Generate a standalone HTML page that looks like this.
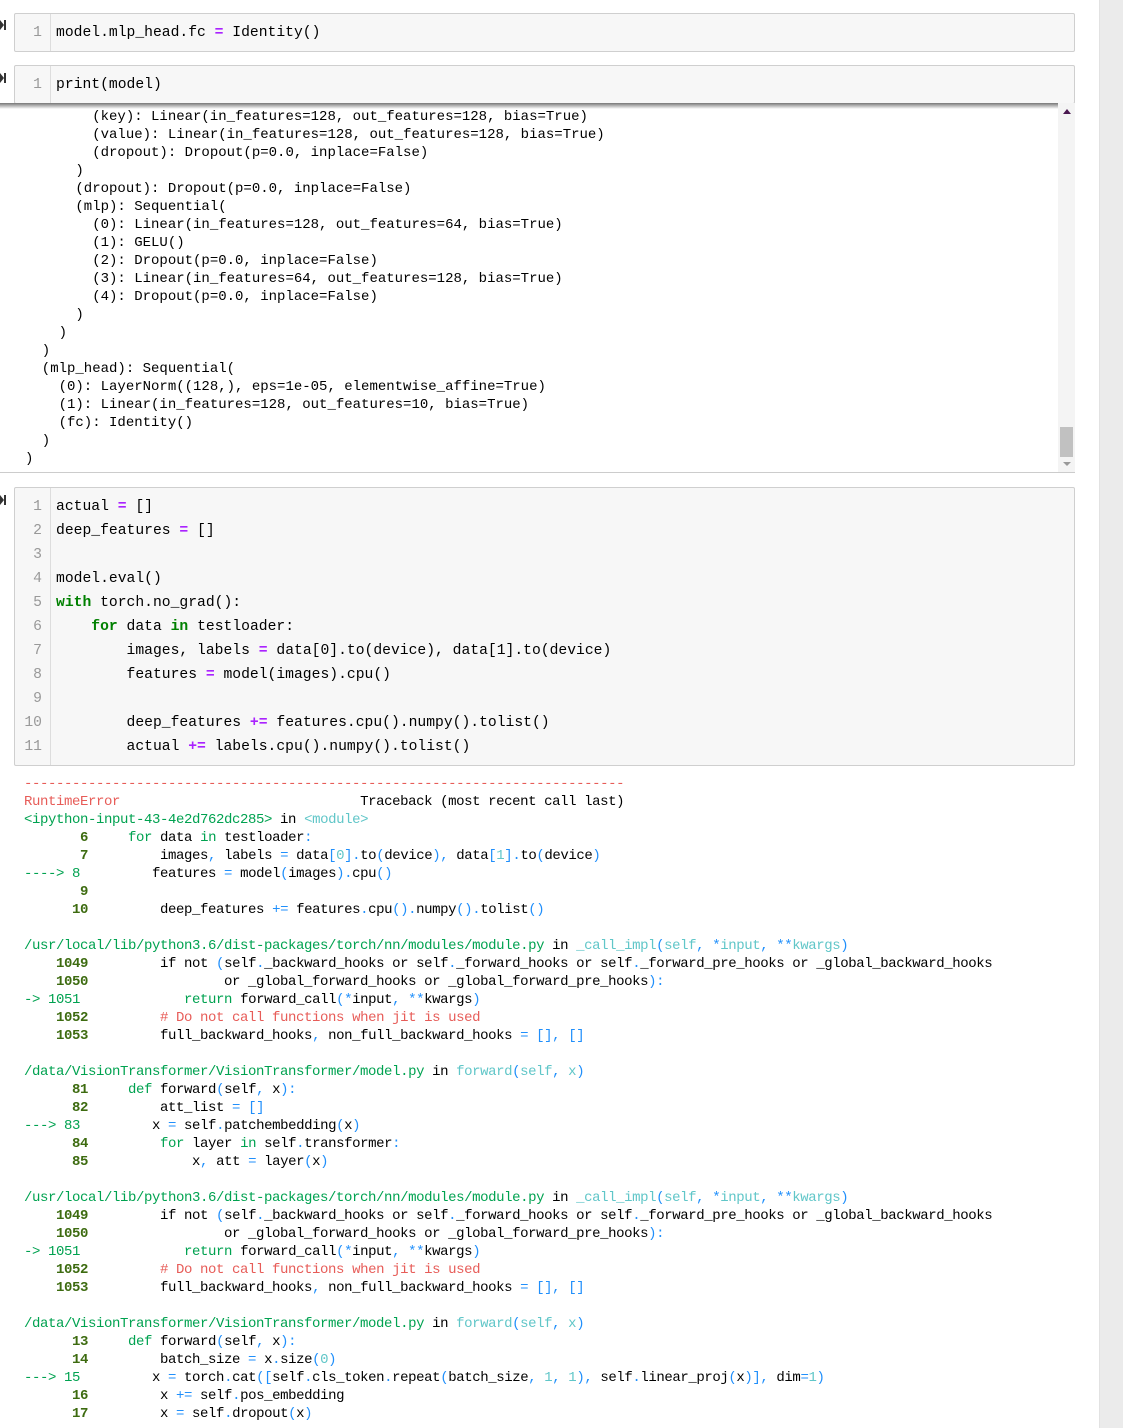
<!DOCTYPE html>
<html><head><meta charset="utf-8">
<style>
*{margin:0;padding:0;box-sizing:border-box}
body{width:1123px;height:1428px;background:#fff;position:relative;overflow:hidden;font-family:"Liberation Mono","NanumGothic",monospace}
.side{position:absolute;left:1099px;top:0;width:24px;height:1428px;background:#ebebeb;border-left:1px solid #e2e2e2}
.cell{position:absolute;left:14px;width:1061px;background:#f7f7f7;border:1px solid #cfcfcf;border-radius:2px}
.gut{position:absolute;left:0;top:0;bottom:0;width:36px;border-right:1px solid #ddd}
.cell pre{position:absolute;left:41px;top:0;font-size:14.7px;line-height:24px;color:#000;font-family:"Liberation Mono",monospace}
.ln{position:absolute;left:0;width:27px;text-align:right;font-size:14.7px;line-height:24px;color:#999;top:0}
.mk{position:absolute;left:0;width:6px;height:12px;font-size:10px}
.mk:before{content:"";position:absolute;left:0;top:0;border-left:4px solid #333;border-top:5px solid transparent;border-bottom:5px solid transparent}
.mk:after{content:"";position:absolute;left:4px;top:0;width:2px;height:10px;background:#333}
.op{color:#aa22ff;font-weight:bold}
.kw{color:#008000;font-weight:bold}
.out{position:absolute;left:0;top:103px;width:1075px;height:370px;overflow:hidden;background:#fff;border-bottom:1px solid #ccc}
.out .sh{position:absolute;left:0;top:0;width:1058px;height:6px;background:linear-gradient(#777,rgba(255,255,255,0))}
.out pre{position:absolute;left:25px;top:5px;font-size:14px;line-height:18px;color:#000;font-family:"Liberation Mono",monospace}
.sb{position:absolute;left:1058px;top:0;width:17px;height:370px;background:#f4f4f4}
.thumb{position:absolute;left:2px;top:324px;width:13px;height:30px;background:#c1c1c1}
.tb{position:absolute;left:24px;top:775px;font-size:14px;letter-spacing:-0.4px;line-height:18px;color:#000;font-family:"Liberation Mono","NanumGothic",monospace}
.g{color:#00a250}.c{color:#60c6c8}.b{color:#208ffb}.r{color:#e75c58}.n{color:#3d6b10;font-weight:bold}
</style></head><body>
<div class="side"></div>

<div class="mk" style="top:20px"></div>
<div class="cell" style="top:13px;height:39px"><div class="gut"></div><div class="ln" style="top:7px">1</div><pre style="top:7px">model.mlp_head.fc <span class="op">=</span> Identity()</pre></div>

<div class="mk" style="top:73px"></div>
<div class="cell" style="top:65px;height:39px"><div class="gut"></div><div class="ln" style="top:7px">1</div><pre style="top:7px">print(model)</pre></div>

<div class="out"><div class="sh"></div>
<pre>        (key): Linear(in_features=128, out_features=128, bias=True)
        (value): Linear(in_features=128, out_features=128, bias=True)
        (dropout): Dropout(p=0.0, inplace=False)
      )
      (dropout): Dropout(p=0.0, inplace=False)
      (mlp): Sequential(
        (0): Linear(in_features=128, out_features=64, bias=True)
        (1): GELU()
        (2): Dropout(p=0.0, inplace=False)
        (3): Linear(in_features=64, out_features=128, bias=True)
        (4): Dropout(p=0.0, inplace=False)
      )
    )
  )
  (mlp_head): Sequential(
    (0): LayerNorm((128,), eps=1e-05, elementwise_affine=True)
    (1): Linear(in_features=128, out_features=10, bias=True)
    (fc): Identity()
  )
)</pre>
<div class="sb"><div style="position:absolute;left:5px;top:6px;border-left:4px solid transparent;border-right:4px solid transparent;border-bottom:5px solid #4a1850"></div><div class="thumb"></div><div style="position:absolute;left:5px;top:359px;border-left:4px solid transparent;border-right:4px solid transparent;border-top:4px solid #999"></div></div>
</div>

<div class="mk" style="top:495px"></div>
<div class="cell" style="top:487px;height:279px"><div class="gut"></div>
<div class="ln" style="top:7px">1<br>2<br>3<br>4<br>5<br>6<br>7<br>8<br>9<br>10<br>11</div>
<pre style="top:7px">actual <span class="op">=</span> []
deep_features <span class="op">=</span> []

model.eval()
<span class="kw">with</span> torch.no_grad():
    <span class="kw">for</span> data <span class="kw">in</span> testloader:
        images, labels <span class="op">=</span> data[0].to(device), data[1].to(device)
        features <span class="op">=</span> model(images).cpu()

        deep_features <span class="op">+=</span> features.cpu().numpy().tolist()
        actual <span class="op">+=</span> labels.cpu().numpy().tolist()</pre></div>

<pre class="tb"><span class="r">---------------------------------------------------------------------------</span>
<span class="r">RuntimeError</span>                              Traceback (most recent call last)
<span class="g">&lt;ipython-input-43-4e2d762dc285&gt;</span> in <span class="c">&lt;module&gt;</span>
<span class="n">       6</span>     <span class="g">for</span> data <span class="g">in</span> testloader<span class="b">:</span>
<span class="n">       7</span>         images<span class="b">,</span> labels <span class="b">=</span> data<span class="b">[</span><span class="c">0</span><span class="b">]</span><span class="b">.</span>to<span class="b">(</span>device<span class="b">)</span><span class="b">,</span> data<span class="b">[</span><span class="c">1</span><span class="b">]</span><span class="b">.</span>to<span class="b">(</span>device<span class="b">)</span>
<span class="g">----&gt; 8</span>         features <span class="b">=</span> model<span class="b">(</span>images<span class="b">)</span><span class="b">.</span>cpu<span class="b">()</span>
<span class="n">       9</span>
<span class="n">      10</span>         deep_features <span class="b">+=</span> features<span class="b">.</span>cpu<span class="b">()</span><span class="b">.</span>numpy<span class="b">()</span><span class="b">.</span>tolist<span class="b">()</span>

<span class="g">/usr/local/lib/python3.6/dist-packages/torch/nn/modules/module.py</span> in <span class="c">_call_impl</span><span class="b">(</span><span class="c">self</span><span class="b">,</span> <span class="b">*</span><span class="c">input</span><span class="b">,</span> <span class="b">**</span><span class="c">kwargs</span><span class="b">)</span>
<span class="n">    1049</span>         if not <span class="b">(</span>self<span class="b">.</span>_backward_hooks or self<span class="b">.</span>_forward_hooks or self<span class="b">.</span>_forward_pre_hooks or _global_backward_hooks
<span class="n">    1050</span>                 or _global_forward_hooks or _global_forward_pre_hooks<span class="b">):</span>
<span class="g">-&gt; 1051</span>             <span class="g">return</span> forward_call<span class="b">(*</span>input<span class="b">,</span> <span class="b">**</span>kwargs<span class="b">)</span>
<span class="n">    1052</span>         <span class="r"># Do not call functions when jit is used</span>
<span class="n">    1053</span>         full_backward_hooks<span class="b">,</span> non_full_backward_hooks <span class="b">=</span> <span class="b">[],</span> <span class="b">[]</span>

<span class="g">/data/VisionTransformer/VisionTransformer/model.py</span> in <span class="c">forward</span><span class="b">(</span><span class="c">self</span><span class="b">,</span> <span class="c">x</span><span class="b">)</span>
<span class="n">      81</span>     <span class="g">def</span> forward<span class="b">(</span>self<span class="b">,</span> x<span class="b">):</span>
<span class="n">      82</span>         att_list <span class="b">=</span> <span class="b">[]</span>
<span class="g">---&gt; 83</span>         x <span class="b">=</span> self<span class="b">.</span>patchembedding<span class="b">(</span>x<span class="b">)</span>
<span class="n">      84</span>         <span class="g">for</span> layer <span class="g">in</span> self<span class="b">.</span>transformer<span class="b">:</span>
<span class="n">      85</span>             x<span class="b">,</span> att <span class="b">=</span> layer<span class="b">(</span>x<span class="b">)</span>

<span class="g">/usr/local/lib/python3.6/dist-packages/torch/nn/modules/module.py</span> in <span class="c">_call_impl</span><span class="b">(</span><span class="c">self</span><span class="b">,</span> <span class="b">*</span><span class="c">input</span><span class="b">,</span> <span class="b">**</span><span class="c">kwargs</span><span class="b">)</span>
<span class="n">    1049</span>         if not <span class="b">(</span>self<span class="b">.</span>_backward_hooks or self<span class="b">.</span>_forward_hooks or self<span class="b">.</span>_forward_pre_hooks or _global_backward_hooks
<span class="n">    1050</span>                 or _global_forward_hooks or _global_forward_pre_hooks<span class="b">):</span>
<span class="g">-&gt; 1051</span>             <span class="g">return</span> forward_call<span class="b">(*</span>input<span class="b">,</span> <span class="b">**</span>kwargs<span class="b">)</span>
<span class="n">    1052</span>         <span class="r"># Do not call functions when jit is used</span>
<span class="n">    1053</span>         full_backward_hooks<span class="b">,</span> non_full_backward_hooks <span class="b">=</span> <span class="b">[],</span> <span class="b">[]</span>

<span class="g">/data/VisionTransformer/VisionTransformer/model.py</span> in <span class="c">forward</span><span class="b">(</span><span class="c">self</span><span class="b">,</span> <span class="c">x</span><span class="b">)</span>
<span class="n">      13</span>     <span class="g">def</span> forward<span class="b">(</span>self<span class="b">,</span> x<span class="b">):</span>
<span class="n">      14</span>         batch_size <span class="b">=</span> x<span class="b">.</span>size<span class="b">(</span><span class="c">0</span><span class="b">)</span>
<span class="g">---&gt; 15</span>         x <span class="b">=</span> torch<span class="b">.</span>cat<span class="b">([</span>self<span class="b">.</span>cls_token<span class="b">.</span>repeat<span class="b">(</span>batch_size<span class="b">,</span> <span class="c">1</span><span class="b">,</span> <span class="c">1</span><span class="b">),</span> self<span class="b">.</span>linear_proj<span class="b">(</span>x<span class="b">)],</span> dim<span class="b">=</span><span class="c">1</span><span class="b">)</span>
<span class="n">      16</span>         x <span class="b">+=</span> self<span class="b">.</span>pos_embedding
<span class="n">      17</span>         x <span class="b">=</span> self<span class="b">.</span>dropout<span class="b">(</span>x<span class="b">)</span></pre>
</body></html>
